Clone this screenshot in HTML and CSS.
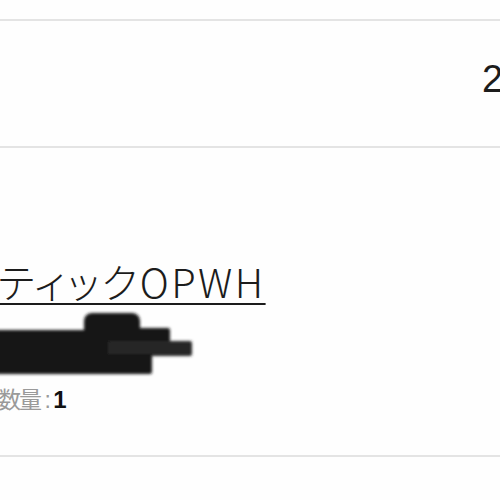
FILE: index.html
```html
<html>
<head>
  <title>注文</title>
  <link rel="stylesheet" href="styles.css">
</head>
<body>
  <div class="gap"></div>

  <div class="price-row">
    <span class="price">2,480円</span>
  </div>

  <div class="item">
    <a class="item-name">ティックOPWH</a>
    <svg class="redact" width="200" height="70" viewBox="0 0 200 70">
      <g fill="#141414" filter="url(#soft)">
        <rect x="-10" y="20" width="150" height="32" rx="4"/>
        <rect x="-10" y="30" width="160" height="34" rx="3"/>
        <rect x="84" y="3" width="56" height="30" rx="8"/>
        <rect x="100" y="18" width="70" height="15" rx="2"/>
        <rect x="108" y="31" width="84" height="15" rx="2" fill="#262626"/>
        <rect x="90" y="44" width="62" height="20" rx="2"/>
      </g>
      <defs>
        <filter id="soft"><feGaussianBlur stdDeviation="1.4"/></filter>
      </defs>
    </svg>
    <div class="qty"><span class="qty-label">数量 : </span><b>1</b></div>
  </div>
</body>
</html>
```

FILE: styles.css
```css
html { background:#fefefe; }

body {
  margin:0;
  overflow:hidden;
  font-family:"Liberation Sans", "Noto Sans CJK JP", sans-serif;
  color:#1c1c1c;
}

.gap { height:19px; }

.price-row
{
  height:125px;
  border-top:2px solid #e4e4e4;
  border-bottom:2px solid #e4e4e4;
  display:flex;
  align-items:center;
  overflow:hidden;
}
.price { margin-left:482px; font-size:38px; white-space:nowrap; padding-bottom:16px; }

.item
{
  margin-left:-2px;
  padding-top:110px;
  height:197px;
  border-bottom:2px solid #e4e4e4;
}

.item-name
{
  display:block;
  font-family:"Noto Sans CJK JP", sans-serif;
  font-weight:300;
  font-size:40px;
  line-height:46px;
  letter-spacing:2.4px;
  text-decoration:underline;
  text-decoration-thickness:2px;
  text-underline-offset:5px;
  font-feature-settings:"palt";
  color:#1c1c1c;
}

.redact { display:block; margin:6px 0 0 2px; }

.qty { font-size:23px; margin-top:6px; line-height:28px; }
.qty-label { color:#9a9a9a; letter-spacing:-2px; }
.qty b { color:#111; font-size:24px; }
```
